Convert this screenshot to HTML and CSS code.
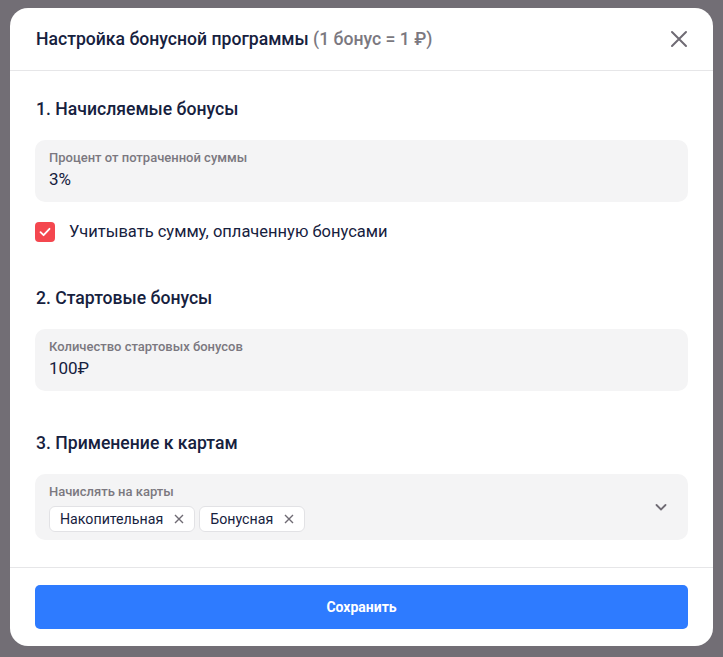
FILE: index.html
```html
<!DOCTYPE html>
<html lang="ru">
<head>
    <meta charset="UTF-8">
    <meta name="viewport" content="width=device-width, initial-scale=1.0">
    <title>Настройка бонусной программы</title>
    <link rel="stylesheet" href="styles.css">
</head>
<body>
    <div class="modal">
        <div class="modal-header">
            <h1 class="modal-title">Настройка бонусной программы <span class="muted">(1 бонус = 1 ₽)</span></h1>
            <button class="close-button" aria-label="Закрыть">
                <svg width="18" height="18" viewBox="0 0 18 18">
                    <path d="M2 2 L16 16 M16 2 L2 16" stroke="#6f6b74" stroke-width="2" stroke-linecap="round"/>
                </svg>
            </button>
        </div>

        <div class="modal-body">
            <section class="section">
                <h2 class="section-title">1. Начисляемые бонусы</h2>
                <div class="field">
                    <div class="field-label">Процент от потраченной суммы</div>
                    <div class="field-value">3%</div>
                </div>
                <label class="checkbox-row">
                    <span class="checkbox">
                        <svg width="14" height="14" viewBox="0 0 14 14">
                            <path d="M2.5 7.2 L5.6 10.2 L11.5 3.8" fill="none" stroke="#fff" stroke-width="1.8" stroke-linecap="round" stroke-linejoin="round"/>
                        </svg>
                    </span>
                    Учитывать сумму, оплаченную бонусами
                </label>
            </section>

            <section class="section section-second">
                <h2 class="section-title">2. Стартовые бонусы</h2>
                <div class="field">
                    <div class="field-label">Количество стартовых бонусов</div>
                    <div class="field-value">100₽</div>
                </div>
            </section>

            <section class="section section-third">
                <h2 class="section-title">3. Применение к картам</h2>
                <div class="field field-select">
                    <div class="select-content">
                        <div class="field-label">Начислять на карты</div>
                        <div class="chips">
                            <span class="chip">Накопительная
                                <svg width="10" height="10" viewBox="0 0 10 10"><path d="M1 1 L9 9 M9 1 L1 9" stroke="#6f6b74" stroke-width="1.4"/></svg>
                            </span>
                            <span class="chip">Бонусная
                                <svg width="10" height="10" viewBox="0 0 10 10"><path d="M1 1 L9 9 M9 1 L1 9" stroke="#6f6b74" stroke-width="1.4"/></svg>
                            </span>
                        </div>
                    </div>
                    <svg class="chevron" width="14" height="14" viewBox="0 0 14 14">
                        <path d="M2.5 5 L7 9.5 L11.5 5" fill="none" stroke="#6f6b74" stroke-width="1.8" stroke-linecap="round" stroke-linejoin="round"/>
                    </svg>
                </div>
            </section>
        </div>

        <div class="modal-footer">
            <button class="save-button">Сохранить</button>
        </div>
    </div>
</body>
</html>
```

FILE: styles.css
```css
* {
    margin: 0;
    padding: 0;
    box-sizing: border-box;
}

body {
    font-family: Roboto, 'Noto Sans', sans-serif;
    background: #726e75;
    padding: 8px 10px 11px;
    height: 657px;
    color: #16213e;
}

.modal {
    background: #fff;
    border-radius: 18px;
    height: 638px;
    display: flex;
    flex-direction: column;
    overflow: hidden;
}

.modal-header {
    height: 63px;
    display: flex;
    align-items: center;
    justify-content: space-between;
    padding: 0 22px 0 26px;
    border-bottom: 1px solid #e6e6e8;
}

.modal-title {
    font-size: 17.6px;
    font-weight: 500;
    color: #16213e;
}

.muted {
    color: #7b7880;
}

.close-button {
    background: none;
    border: none;
    width: 24px;
    height: 24px;
    display: flex;
    align-items: center;
    justify-content: center;
    cursor: pointer;
}

.modal-body {
    flex: 1;
    padding: 26px 25px 0;
    border-bottom: 1px solid #e6e6e8;
}

.section-title {
    font-size: 17.6px;
    font-weight: 500;
    line-height: 24px;
    margin-bottom: 19px;
    padding-left: 1px;
}

.section-second {
    margin-top: 44px;
}

.section-third {
    margin-top: 40px;
}

.field {
    background: #f4f4f5;
    border-radius: 10px;
    height: 62px;
    padding: 9px 14px 0;
}

.field-label {
    font-size: 13px;
    font-weight: 500;
    line-height: 17px;
    color: #7b7880;
}

.field-value {
    font-size: 17px;
    line-height: 24px;
    margin-top: 1px;
}

.checkbox-row {
    display: flex;
    align-items: center;
    gap: 14px;
    margin-top: 20px;
    font-size: 16.5px;
    line-height: 20px;
}

.checkbox {
    width: 20px;
    height: 20px;
    border-radius: 4px;
    background: #f4474f;
    display: flex;
    align-items: center;
    justify-content: center;
}

.field-select {
    height: 66px;
    display: flex;
    align-items: center;
    justify-content: space-between;
    padding: 0 20px 0 14px;
}

.chips {
    display: flex;
    gap: 4px;
    margin-top: 6px;
}

.chip {
    display: flex;
    align-items: center;
    gap: 11px;
    height: 26px;
    padding: 0 10px 0 10px;
    background: #fff;
    border: 1px solid #e2e2e5;
    border-radius: 6px;
    font-size: 14.2px;
}

.modal-footer {
    padding: 17px 25px;
    height: 78px;
}

.save-button {
    width: 100%;
    height: 44px;
    border: none;
    border-radius: 5px;
    background: #2e7bff;
    color: #fff;
    font-family: Roboto, sans-serif;
    font-size: 14px;
    font-weight: 700;
    cursor: pointer;
}
```
